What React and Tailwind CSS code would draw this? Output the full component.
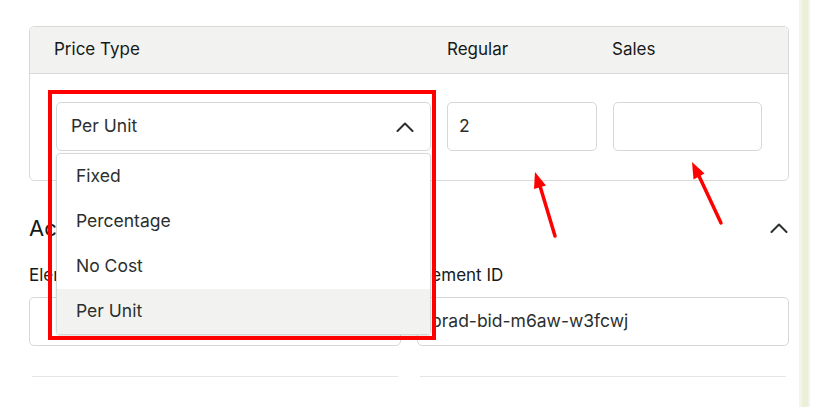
import React from 'react'

const options = ['Fixed', 'Percentage', 'No Cost', 'Per Unit']

function Chevron({ className }) {
  return (
    <svg viewBox="0 0 18 10" className={className} fill="none">
      <polyline points="1.5,9 9,1.5 16.5,9" stroke="currentColor" strokeWidth="2" strokeLinecap="round" strokeLinejoin="round" />
    </svg>
  )
}

export default function App() {
  return (
    <div className="relative w-[834px] h-[408px] overflow-hidden bg-white text-[#161918]" style={{ fontFamily: 'Inter, "Noto Sans", sans-serif' }}>
      <div className="flex h-full">
        {/* Main panel */}
        <div className="w-[799px] pl-[29px] pr-[10px] pt-[26px]">
          {/* Price table */}
          <div className="rounded-[5px] border border-[#d8dad8]">
            <div className="grid grid-cols-[375px_150px_150px] gap-4 px-[24px] h-[47px] items-center bg-[#f2f3f1] border-b border-[#d8dad8] rounded-t-[5px] text-[17px]">
              <div>Price Type</div>
              <div className="pl-[2px]">Regular</div>
              <div className="pl-[1px]">Sales</div>
            </div>
            <div className="grid grid-cols-[375px_150px_150px] gap-4 px-[26px] pt-[28px] pb-[29px]">
              <div className="relative">
                <div className="flex h-[49px] items-center justify-between rounded-[5px] border border-[#d6d8d6] pl-[14px] pr-[16px] text-[17.5px] text-[#2b2f2d]">
                  <span>Per Unit</span>
                  <Chevron className="w-[18px] h-[10px] text-[#2b2f2d]" />
                </div>
                {/* Open menu */}
                <div className="absolute left-0 top-[51px] z-10 w-full rounded-[4px] border border-[#d6d8d6] bg-white shadow-sm text-[17.5px] text-[#2b2f2d]">
                  {options.map((opt) => (
                    <div
                      key={opt}
                      className={`flex h-[45px] items-center pl-[19px] ${opt === 'Per Unit' ? 'bg-[#f2f3f1]' : ''}`}
                    >
                      {opt}
                    </div>
                  ))}
                </div>
              </div>
              <div className="flex h-[49px] items-center rounded-[5px] border border-[#d6d8d6] px-[11px] text-[17.5px] text-[#2b2f2d]">2</div>
              <div className="h-[49px] w-[149px] rounded-[5px] border border-[#d6d8d6]" />
            </div>
          </div>

          {/* Accessibility section */}
          <div className="mt-[30px] flex h-[34px] items-center justify-between">
            <h2 className="text-[22px] font-normal">Accessibility</h2>
            <Chevron className="mr-[1px] w-[18px] h-[10px] text-[#2b2f2d]" />
          </div>
          <div className="mt-[18px] grid grid-cols-2 gap-4">
            <div>
              <div className="h-[24px] leading-[24px] text-[17px]">Element Class</div>
              <div className="mt-[10px] h-[49px] rounded-[5px] border border-[#d6d8d6]" />
              <div className="mx-[3px] mt-[30px] border-t border-[#e4e6e4]" />
            </div>
            <div>
              <div className="h-[24px] leading-[24px] text-[17px]">Element ID</div>
              <div className="mt-[10px] flex h-[49px] items-center rounded-[5px] border border-[#d6d8d6] px-[13px] text-[17.5px] text-[#2b2f2d]">
                prad-bid-m6aw-w3fcwj
              </div>
              <div className="mx-[3px] mt-[30px] border-t border-[#e4e6e4]" />
            </div>
          </div>
        </div>

        {/* Right edge strip */}
        <div className="w-[11px] h-[407px] border-l-[3px] border-r-[2px] border-[#f2f4ef] bg-[#ecf1d6]" />
      </div>

      {/* Annotation box */}
      <div className="absolute left-[48px] top-[90px] z-20 h-[250px] w-[388px] border-4 border-[#ff0000] pointer-events-none" />

      {/* Annotation arrows */}
      <svg className="absolute inset-0 z-20 pointer-events-none" width="834" height="408">
        <line x1="555" y1="236" x2="540" y2="186" stroke="#ff0000" strokeWidth="3.5" strokeLinecap="round" />
        <polygon points="535,172 546,185.5 534,189" fill="#ff0000" />
        <line x1="721" y1="223" x2="699" y2="176" stroke="#ff0000" strokeWidth="3.5" strokeLinecap="round" />
        <polygon points="692,162 704.5,173.5 693.5,179.5" fill="#ff0000" />
      </svg>
    </div>
  )
}
